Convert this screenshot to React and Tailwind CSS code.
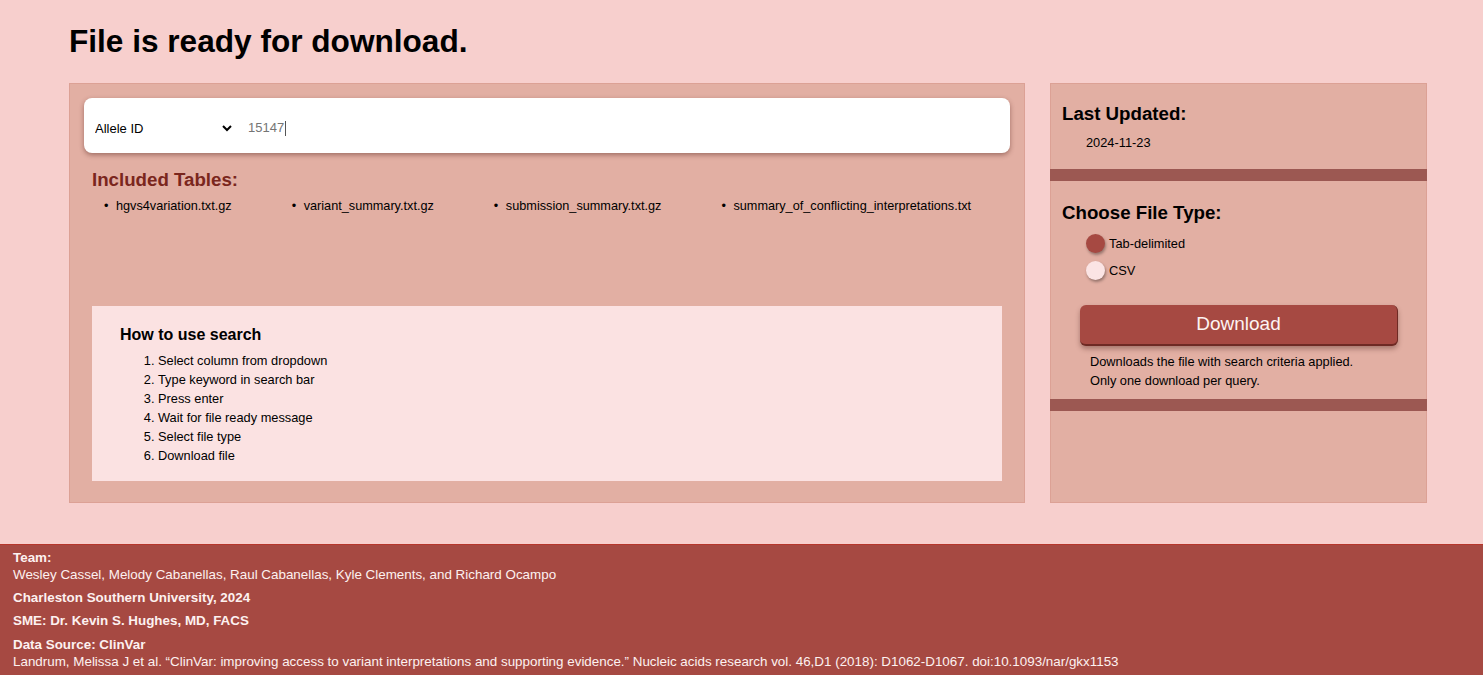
import { useState } from "react";

const tables = [
  "hgvs4variation.txt.gz",
  "variant_summary.txt.gz",
  "submission_summary.txt.gz",
  "summary_of_conflicting_interpretations.txt",
];

const steps = [
  "Select column from dropdown",
  "Type keyword in search bar",
  "Press enter",
  "Wait for file ready message",
  "Select file type",
  "Download file",
];

function Radio({ checked, label, onClick }) {
  return (
    <div className="flex items-center h-[27px] cursor-pointer" onClick={onClick}>
      <span
        className={`w-[19px] h-[19px] rounded-full shadow-[1px_2px_3px_rgba(0,0,0,0.35)] ${
          checked ? "bg-[#a64942]" : "bg-[#fbe4e4]"
        }`}
      ></span>
      <span className="ml-[4px] text-[12.8px] text-black">{label}</span>
    </div>
  );
}

export default function App() {
  const [column, setColumn] = useState("Allele ID");
  const [query, setQuery] = useState("15147");
  const [fileType, setFileType] = useState("tab");

  return (
    <div className="min-h-screen bg-[#f7cfcd] font-['Liberation_Sans',Arial,sans-serif] text-black">
      <div className="pl-[69px] pt-[23px] pb-[41px]">
        {/* Header */}
        <h1 className="text-[31.6px] leading-[36px] font-bold mb-[24px]">
          File is ready for download.
        </h1>

        <div className="flex gap-[25px]">
          {/* Left panel */}
          <div className="w-[956px] h-[420px] bg-[#e2afa3] border border-[#dca195] p-[14px]">
            <div className="h-[55px] bg-white rounded-lg shadow-[0_2px_5px_rgba(80,30,25,0.45)] flex items-center pl-[7px] pt-[5px]">
              <select
                value={column}
                onChange={(e) => setColumn(e.target.value)}
                className="w-[144px] text-[13px] bg-transparent outline-none"
              >
                <option>Allele ID</option>
                <option>Variation ID</option>
                <option>Gene Symbol</option>
              </select>
              <div className="ml-[13px] flex-1 flex items-center">
                <input
                  value={query}
                  onChange={(e) => setQuery(e.target.value)}
                  size={5}
                  className="w-[37px] text-[13px] text-[#757575] outline-none"
                />
                <span className="w-px h-[15px] bg-[#555]"></span>
              </div>
            </div>

            <div className="px-[8px]">
              <h3 className="mt-[16px] text-[18.7px] leading-[22px] font-bold text-[#7a261d]">
                Included Tables:
              </h3>
              <ul className="flex gap-[72px] mt-[8px] pl-[24px] text-[12.7px] leading-[15px]">
                {tables.map((t) => (
                  <li key={t} className="relative">
                    <span className="absolute -left-[12px] top-0">•</span>
                    {t}
                  </li>
                ))}
              </ul>

              {/* How to */}
              <div className="mt-[92px] bg-[#fbe2e2] pl-[28px] pt-[19px] pb-[16px]">
                <h4 className="text-[16px] leading-[20px] font-bold">How to use search</h4>
                <ol className="list-decimal pl-[38px] mt-[6px] text-[12.8px] leading-[19px]">
                  {steps.map((s) => (
                    <li key={s}>{s}</li>
                  ))}
                </ol>
              </div>
            </div>
          </div>

          {/* Right panel */}
          <div className="w-[377px] h-[420px] bg-[#e2afa3] border border-[#dca195]">
            <div className="pl-[11px] pt-[19px] pb-[19px]">
              <h3 className="text-[18.7px] leading-[22px] font-bold">Last Updated:</h3>
              <p className="pl-[24px] mt-[10px] text-[12.8px] leading-[15px]">2024-11-23</p>
            </div>
            <div className="h-[12px] bg-[#9c5852] -mx-px"></div>
            <div className="pl-[11px] pt-[21px] pb-[9px]">
              <h3 className="text-[18.7px] leading-[22px] font-bold">Choose File Type:</h3>
              <div className="pl-[24px] mt-[6px]">
                <Radio
                  checked={fileType === "tab"}
                  label="Tab-delimited"
                  onClick={() => setFileType("tab")}
                />
                <Radio
                  checked={fileType === "csv"}
                  label="CSV"
                  onClick={() => setFileType("csv")}
                />
              </div>
              <button className="mt-[21px] ml-[18px] w-[318px] h-[41px] bg-[#a64942] text-[#fdf3f2] text-[19px] rounded-md border-b-2 border-r border-[#6e2a24] shadow-[0_3px_5px_rgba(60,20,15,0.35)]">
                Download
              </button>
              <p className="pl-[28px] mt-[6px] text-[12.8px] leading-[19px]">
                Downloads the file with search criteria applied.
                <br />
                Only one download per query.
              </p>
            </div>
            <div className="h-[12px] bg-[#9c5852] -mx-px"></div>
          </div>
        </div>
      </div>

      {/* Footer */}
      <footer className="bg-[#a64942] border-t border-[#b6362b] px-[13px] pt-[4px] pb-[8px] text-[13.4px] leading-[17px] text-[#fdf1f0]">
        <p>
          <span className="font-bold">Team:</span>
          <br />
          Wesley Cassel, Melody Cabanellas, Raul Cabanellas, Kyle Clements, and Richard Ocampo
        </p>
        <p className="mt-[6px] font-bold">Charleston Southern University, 2024</p>
        <p className="mt-[6px] font-bold">SME: Dr. Kevin S. Hughes, MD, FACS</p>
        <p className="mt-[7px]">
          <span className="font-bold">Data Source: ClinVar</span>
          <br />
          Landrum, Melissa J et al. “ClinVar: improving access to variant interpretations and supporting evidence.” Nucleic acids research vol. 46,D1 (2018): D1062-D1067. doi:10.1093/nar/gkx1153
        </p>
      </footer>
    </div>
  );
}
